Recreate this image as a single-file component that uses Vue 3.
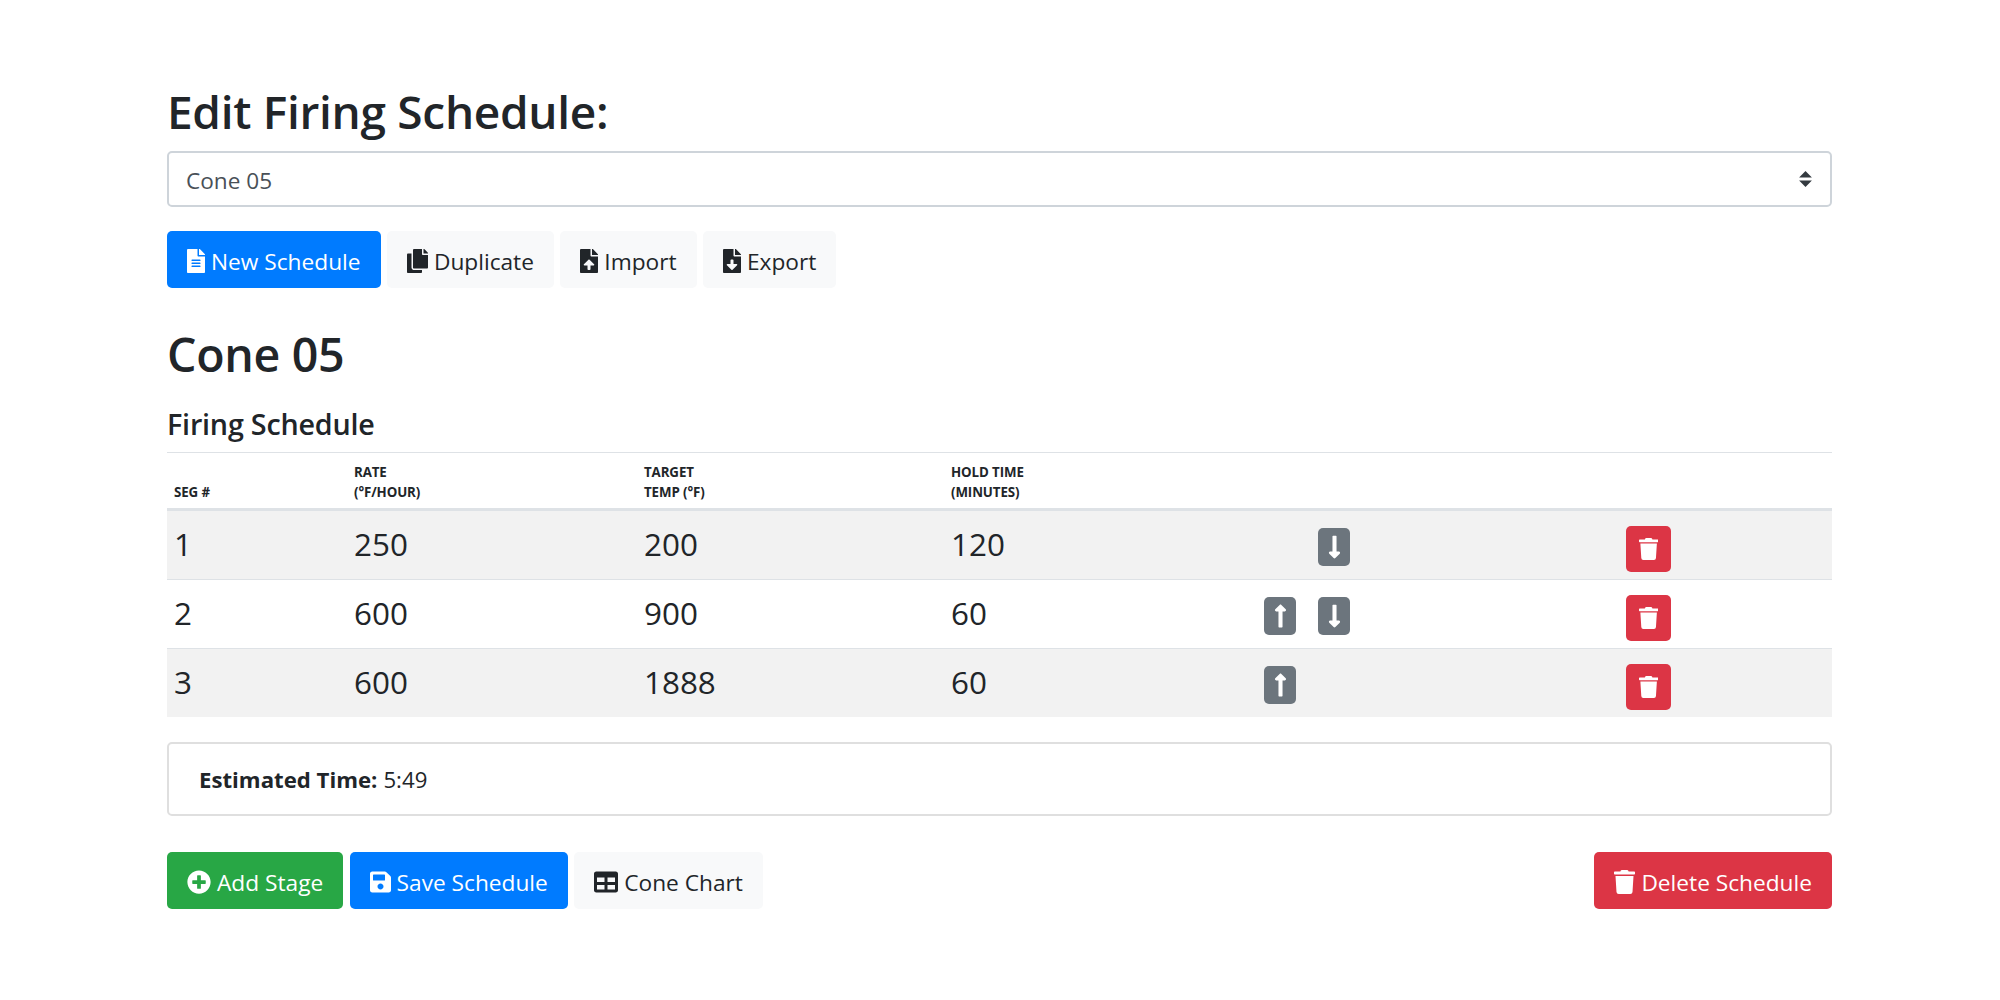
<script setup>
const icons = {
  file: { vb: '0 0 384 512', d: 'M224 136V0H24C10.7 0 0 10.7 0 24v464c0 13.3 10.7 24 24 24h336c13.3 0 24-10.7 24-24V160H248c-13.2 0-24-10.8-24-24zm64 236c0 6.6-5.4 12-12 12H108c-6.6 0-12-5.4-12-12v-8c0-6.6 5.4-12 12-12h168c6.6 0 12 5.4 12 12v8zm0-64c0 6.6-5.4 12-12 12H108c-6.6 0-12-5.4-12-12v-8c0-6.6 5.4-12 12-12h168c6.6 0 12 5.4 12 12v8zm0-72v8c0 6.6-5.4 12-12 12H108c-6.6 0-12-5.4-12-12v-8c0-6.6 5.4-12 12-12h168c6.6 0 12 5.4 12 12zm96-114.1v6.1H256V0h6.1c6.4 0 12.5 2.5 17 7l97.9 98c4.5 4.5 7 10.6 7 16.9z' },
  copy: { vb: '0 0 448 512', d: 'M320 448v40c0 13.255-10.745 24-24 24H24c-13.255 0-24-10.745-24-24V120c0-13.255 10.745-24 24-24h72v296c0 30.879 25.121 56 56 56h168zm0-344V0H152c-13.255 0-24 10.745-24 24v368c0 13.255 10.745 24 24 24h272c13.255 0 24-10.745 24-24V128H344c-13.2 0-24-10.8-24-24zm120.971-31.029L375.029 7.029A24 24 0 0 0 358.059 0H352v96h96v-6.059a24 24 0 0 0-7.029-16.97z' },
  upload: { vb: '0 0 384 512', d: 'M224 136V0H24C10.7 0 0 10.7 0 24v464c0 13.3 10.7 24 24 24h336c13.3 0 24-10.7 24-24V160H248c-13.2 0-24-10.8-24-24zm65.18 216.01H224v80c0 8.84-7.16 16-16 16h-32c-8.84 0-16-7.16-16-16v-80H94.82c-14.28 0-21.41-17.29-11.27-27.36l96.42-95.7c6.65-6.61 17.39-6.61 24.04 0l96.42 95.7c10.15 10.07 3.03 27.36-11.25 27.36zM377 105L279.1 7c-4.5-4.5-10.6-7-17-7H256v128h128v-6.1c0-6.3-2.5-12.4-7-16.9z' },
  download: { vb: '0 0 384 512', d: 'M224 136V0H24C10.7 0 0 10.7 0 24v464c0 13.3 10.7 24 24 24h336c13.3 0 24-10.7 24-24V160H248c-13.2 0-24-10.8-24-24zm76.45 211.36l-96.42 95.7c-6.65 6.61-17.39 6.61-24.04 0l-96.42-95.7C73.42 337.29 80.54 320 94.82 320H160v-80c0-8.84 7.16-16 16-16h32c8.84 0 16 7.16 16 16v80h65.18c14.28 0 21.4 17.29 11.27 27.36zM377 105L279.1 7c-4.5-4.5-10.6-7-17-7H256v128h128v-6.1c0-6.3-2.5-12.4-7-16.9z' },
  plus: { vb: '0 0 512 512', d: 'M256 8C119 8 8 119 8 256s111 248 248 248 248-111 248-248S393 8 256 8zm144 276c0 6.6-5.4 12-12 12h-92v92c0 6.6-5.4 12-12 12h-56c-6.6 0-12-5.4-12-12v-92h-92c-6.6 0-12-5.4-12-12v-56c0-6.6 5.4-12 12-12h92v-92c0-6.6 5.4-12 12-12h56c6.6 0 12 5.4 12 12v92h92c6.6 0 12 5.4 12 12v56z' },
  save: { vb: '0 0 448 512', d: 'M433.941 129.941l-83.882-83.882A48 48 0 0 0 316.118 32H48C21.49 32 0 53.49 0 80v352c0 26.51 21.49 48 48 48h352c26.51 0 48-21.49 48-48V163.882a48 48 0 0 0-14.059-33.941zM224 416c-35.346 0-64-28.654-64-64 0-35.346 28.654-64 64-64s64 28.654 64 64c0 35.346-28.654 64-64 64zm96-304.52V212c0 6.627-5.373 12-12 12H76c-6.627 0-12-5.373-12-12V108c0-6.627 5.373-12 12-12h228.52c3.183 0 6.235 1.264 8.485 3.515l3.48 3.48A11.996 11.996 0 0 1 320 111.48z' },
  table: { vb: '0 0 512 512', d: 'M464 32H48C21.49 32 0 53.49 0 80v352c0 26.51 21.49 48 48 48h416c26.51 0 48-21.49 48-48V80c0-26.51-21.49-48-48-48zM224 416H64v-96h160v96zm0-160H64v-96h160v96zm224 160H288v-96h160v96zm0-160H288v-96h160v96z' },
  trash: { vb: '0 0 448 512', d: 'M432 32H312l-9.4-18.7A24 24 0 0 0 281.1 0H166.8a23.72 23.72 0 0 0-21.4 13.3L136 32H16A16 16 0 0 0 0 48v32a16 16 0 0 0 16 16h416a16 16 0 0 0 16-16V48a16 16 0 0 0-16-16zM53.2 467a48 48 0 0 0 47.9 45h245.8a48 48 0 0 0 47.9-45L416 128H32z' },
  up: { vb: '0 0 256 512', d: 'M88 166.059V468c0 6.627 5.373 12 12 12h56c6.627 0 12-5.373 12-12V166.059h46.059c21.382 0 32.09-25.851 16.971-40.971l-86.059-86.059c-9.373-9.373-24.569-9.373-33.941 0l-86.059 86.059c-15.119 15.119-4.411 40.971 16.971 40.971H88z' },
  down: { vb: '0 0 256 512', d: 'M168 345.941V44c0-6.627-5.373-12-12-12h-56c-6.627 0-12 5.373-12 12v301.941H41.941c-21.382 0-32.09 25.851-16.971 40.971l86.059 86.059c9.373 9.373 24.569 9.373 33.941 0l86.059-86.059c15.119-15.119 4.411-40.971-16.971-40.971H168z' },
}
const topButtons = [
  { label: 'New Schedule', icon: 'file', kind: 'primary' },
  { label: 'Duplicate', icon: 'copy', kind: 'light' },
  { label: 'Import', icon: 'upload', kind: 'light' },
  { label: 'Export', icon: 'download', kind: 'light' },
]
const rows = [
  { seg: 1, rate: 250, temp: 200, hold: 120, up: false, down: true },
  { seg: 2, rate: 600, temp: 900, hold: 60, up: true, down: true },
  { seg: 3, rate: 600, temp: 1888, hold: 60, up: true, down: false },
]
</script>

<template>
  <main class="page">
    <h1 class="title">Edit Firing Schedule:</h1>
    <div class="select-wrap">
      <select class="select">
        <option>Cone 05</option>
      </select>
      <svg class="select-arrows" viewBox="0 0 4 5"><path d="M2 0L0 2h4zm-2 3h4L2 5z" /></svg>
    </div>

    <div class="btn-row top-row">
      <button v-for="b in topButtons" :key="b.label" class="btn" :class="b.kind">
        <svg class="ico" :viewBox="icons[b.icon].vb"><path :d="icons[b.icon].d" /></svg>{{ b.label }}
      </button>
    </div>

    <h2 class="name">Cone 05</h2>
    <h3 class="section">Firing Schedule</h3>

    <table class="grid">
      <colgroup>
        <col class="c1" /><col class="c2" /><col class="c3" /><col class="c4" /><col class="c5" /><col class="c6" />
      </colgroup>
      <thead>
        <tr>
          <th>Seg #</th>
          <th>Rate<br />(°F/Hour)</th>
          <th>Target<br />Temp (°F)</th>
          <th>Hold Time<br />(Minutes)</th>
          <th></th>
          <th></th>
        </tr>
      </thead>
      <tbody>
        <tr v-for="r in rows" :key="r.seg">
          <td>{{ r.seg }}</td>
          <td>{{ r.rate }}</td>
          <td>{{ r.temp }}</td>
          <td>{{ r.hold }}</td>
          <td class="actions">
            <div class="moves">
              <button class="move" :class="{ hidden: !r.up }">
                <svg class="arrow" :viewBox="icons.up.vb"><path :d="icons.up.d" /></svg>
              </button>
              <button class="move" :class="{ hidden: !r.down }">
                <svg class="arrow" :viewBox="icons.down.vb"><path :d="icons.down.d" /></svg>
              </button>
            </div>
          </td>
          <td class="actions">
            <button class="remove">
              <svg class="bin" :viewBox="icons.trash.vb"><path :d="icons.trash.d" /></svg>
            </button>
          </td>
        </tr>
      </tbody>
    </table>

    <div class="estimate"><strong>Estimated Time:</strong> 5:49</div>

    <div class="btn-row bottom-row">
      <button class="btn success">
        <svg class="ico" :viewBox="icons.plus.vb"><path :d="icons.plus.d" /></svg>Add Stage
      </button>
      <button class="btn primary">
        <svg class="ico" :viewBox="icons.save.vb"><path :d="icons.save.d" /></svg>Save Schedule
      </button>
      <button class="btn light">
        <svg class="ico" :viewBox="icons.table.vb"><path :d="icons.table.d" /></svg>Cone Chart
      </button>
      <button class="btn danger push">
        <svg class="ico" :viewBox="icons.trash.vb"><path :d="icons.trash.d" /></svg>Delete Schedule
      </button>
    </div>
  </main>
</template>

<style>
html, body { margin: 0; background: #fff; }
</style>

<style scoped>
.page {
  width: 1665px;
  margin-left: 167px;
  padding-top: 80px;
  font-family: "Open Sans", "Noto Sans", sans-serif;
  color: #212529;
}
.title {
  margin: 0 0 8px;
  font-size: 46px;
  font-weight: 600;
  line-height: 63px;
  letter-spacing: -0.3px;
}
.select-wrap { position: relative; }
.select {
  display: block;
  width: 100%;
  height: 56px;
  padding: 2px 17px 0;
  appearance: none;
  background: #fff;
  border: 2px solid #ced4da;
  border-radius: 5px;
  font: 400 22.6px "Open Sans", sans-serif;
  color: #495057;
}
.select-arrows {
  position: absolute;
  right: 20px;
  top: 20px;
  width: 13px;
  height: 16px;
  fill: #343a40;
}
.btn-row { display: flex; gap: 6.4px; }
.top-row { margin-top: 24px; }
.btn {
  display: inline-flex;
  align-items: center;
  height: 57px;
  padding: 3px 20px 0;
  border: 0;
  border-radius: 5px;
  font: 400 22.7px "Open Sans", sans-serif;
  white-space: nowrap;
}
.ico {
  height: 24px;
  margin-right: 6px;
  fill: currentColor;
  flex: none;
}
.primary { background: #007bff; color: #fff; }
.light { background: #f8f9fa; color: #212529; }
.success { background: #28a745; color: #fff; }
.danger { background: #dc3545; color: #fff; }
.push { margin-left: auto; }
.name {
  margin: 34px 0 0;
  font-size: 46.5px;
  font-weight: 600;
  line-height: 64px;
  letter-spacing: -0.3px;
}
.section {
  margin: 18px 0 0;
  font-size: 28.7px;
  font-weight: 600;
  line-height: 40px;
  letter-spacing: -0.2px;
}
.grid {
  width: 100%;
  margin-top: 8px;
  table-layout: fixed;
  border-collapse: collapse;
}
.c1 { width: 180px; }
.c2 { width: 290px; }
.c3 { width: 307px; }
.c4 { width: 313px; }
.c5 { width: 362px; }
.c6 { width: 213px; }
th {
  padding: 9px 7px 6px;
  border-top: 1px solid #dee2e6;
  border-bottom: 3px solid #dee2e6;
  font-size: 13.3px;
  font-weight: 700;
  line-height: 20px;
  text-align: left;
  text-transform: uppercase;
  vertical-align: bottom;
  letter-spacing: -0.1px;
}
td {
  height: 68px;
  padding: 9px 7px 0;
  box-sizing: border-box;
  border-top: 1px solid #dee2e6;
  font-size: 31.4px;
  font-weight: 400;
  line-height: 48px;
  vertical-align: top;
}
tbody tr:first-child td { border-top: 0; }
tbody tr:nth-child(odd) { background: #f2f2f2; }
td.actions { padding-top: 15px; padding-bottom: 7px; line-height: 0; }
.moves { display: flex; gap: 22px; margin-top: 2px; }
.move {
  display: flex;
  align-items: center;
  justify-content: center;
  width: 32px;
  height: 38px;
  padding: 0;
  border: 0;
  border-radius: 5px;
  background: #6c757d;
}
.hidden { visibility: hidden; }
.arrow { height: 26px; fill: #fff; }
.remove {
  display: flex;
  align-items: center;
  justify-content: center;
  width: 45px;
  height: 46px;
  padding: 0;
  border: 0;
  border-radius: 5px;
  background: #dc3545;
}
.bin { height: 22px; fill: #fff; }
.estimate {
  margin-top: 25px;
  height: 74px;
  box-sizing: border-box;
  padding: 0 30px;
  display: flex;
  align-items: center;
  gap: 6px;
  border: 2px solid #dfdfdf;
  border-radius: 5px;
  font-size: 22.2px;
}
.estimate strong { font-weight: 700; }
.bottom-row { margin-top: 36px; }
</style>
